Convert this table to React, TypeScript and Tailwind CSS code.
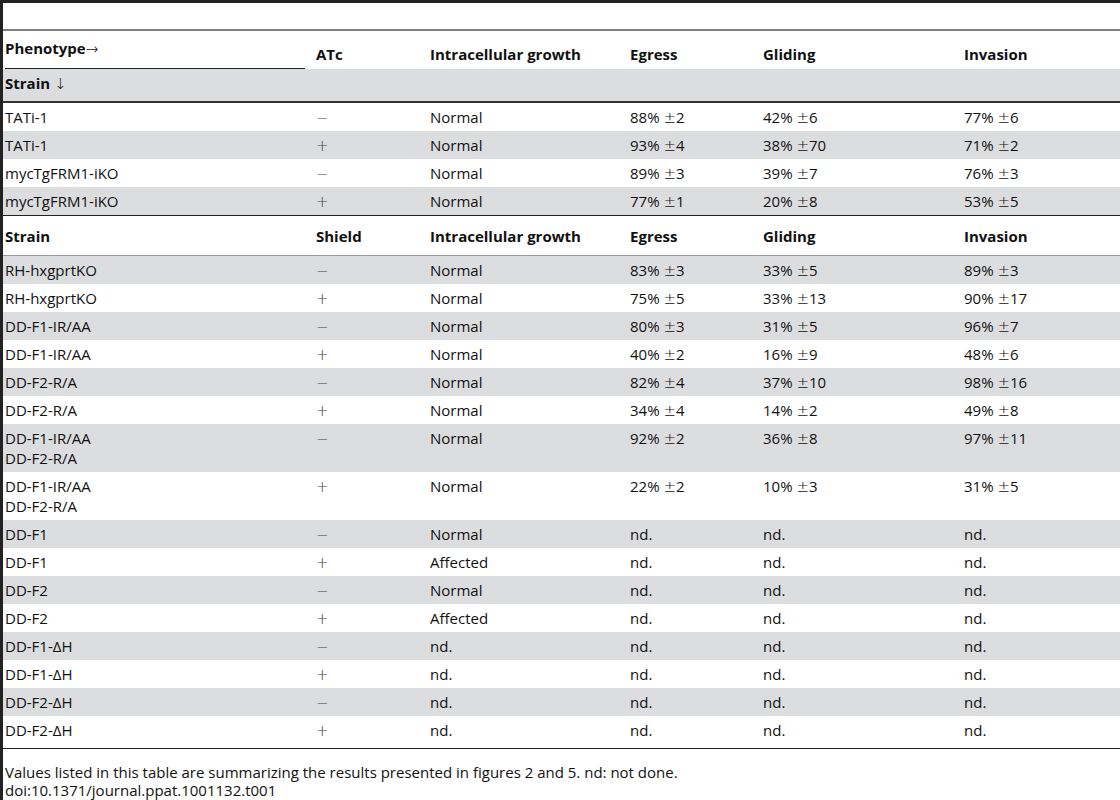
import React from "react";

type Row = {
  strain: string[];
  sign: "+" | "−";
  growth: string;
  egress: string;
  gliding: string;
  invasion: string;
};

const atcRows: Row[] = [
  { strain: ["TATi-1"], sign: "−", growth: "Normal", egress: "88% ±2", gliding: "42% ±6", invasion: "77% ±6" },
  { strain: ["TATi-1"], sign: "+", growth: "Normal", egress: "93% ±4", gliding: "38% ±70", invasion: "71% ±2" },
  { strain: ["mycTgFRM1-iKO"], sign: "−", growth: "Normal", egress: "89% ±3", gliding: "39% ±7", invasion: "76% ±3" },
  { strain: ["mycTgFRM1-iKO"], sign: "+", growth: "Normal", egress: "77% ±1", gliding: "20% ±8", invasion: "53% ±5" },
];

const shieldRows: Row[] = [
  { strain: ["RH-hxgprtKO"], sign: "−", growth: "Normal", egress: "83% ±3", gliding: "33% ±5", invasion: "89% ±3" },
  { strain: ["RH-hxgprtKO"], sign: "+", growth: "Normal", egress: "75% ±5", gliding: "33% ±13", invasion: "90% ±17" },
  { strain: ["DD-F1-IR/AA"], sign: "−", growth: "Normal", egress: "80% ±3", gliding: "31% ±5", invasion: "96% ±7" },
  { strain: ["DD-F1-IR/AA"], sign: "+", growth: "Normal", egress: "40% ±2", gliding: "16% ±9", invasion: "48% ±6" },
  { strain: ["DD-F2-R/A"], sign: "−", growth: "Normal", egress: "82% ±4", gliding: "37% ±10", invasion: "98% ±16" },
  { strain: ["DD-F2-R/A"], sign: "+", growth: "Normal", egress: "34% ±4", gliding: "14% ±2", invasion: "49% ±8" },
  { strain: ["DD-F1-IR/AA", "DD-F2-R/A"], sign: "−", growth: "Normal", egress: "92% ±2", gliding: "36% ±8", invasion: "97% ±11" },
  { strain: ["DD-F1-IR/AA", "DD-F2-R/A"], sign: "+", growth: "Normal", egress: "22% ±2", gliding: "10% ±3", invasion: "31% ±5" },
  { strain: ["DD-F1"], sign: "−", growth: "Normal", egress: "nd.", gliding: "nd.", invasion: "nd." },
  { strain: ["DD-F1"], sign: "+", growth: "Affected", egress: "nd.", gliding: "nd.", invasion: "nd." },
  { strain: ["DD-F2"], sign: "−", growth: "Normal", egress: "nd.", gliding: "nd.", invasion: "nd." },
  { strain: ["DD-F2"], sign: "+", growth: "Affected", egress: "nd.", gliding: "nd.", invasion: "nd." },
  { strain: ["DD-F1-ΔH"], sign: "−", growth: "nd.", egress: "nd.", gliding: "nd.", invasion: "nd." },
  { strain: ["DD-F1-ΔH"], sign: "+", growth: "nd.", egress: "nd.", gliding: "nd.", invasion: "nd." },
  { strain: ["DD-F2-ΔH"], sign: "−", growth: "nd.", egress: "nd.", gliding: "nd.", invasion: "nd." },
  { strain: ["DD-F2-ΔH"], sign: "+", growth: "nd.", egress: "nd.", gliding: "nd.", invasion: "nd." },
];

const cell = "pl-[2px] pr-2 py-1 align-top";
const symbol = { fontFamily: '"DejaVu Sans", sans-serif' };

// a glyph from DejaVu that must not grow the line box
const Sym = ({ c }: { c: string }) => (
  <span className="font-extralight leading-[0px]" style={symbol}>
    {c}
  </span>
);

// value like "88% ±2" -> keep the ± in a math-looking font
const Value = ({ text }: { text: string }) => {
  const parts = text.split("±");
  if (parts.length < 2) return <>{text}</>;
  return (
    <>
      {parts[0]}
      <Sym c="±" />
      {parts[1]}
    </>
  );
};

const DataRow = ({ row, gray }: { row: Row; gray: boolean }) => (
  <tr className={gray ? "bg-[#dcdddf]" : "bg-white"}>
    <td className={cell}>
      {row.strain.map((s, i) => (
        <div key={i}>{s}</div>
      ))}
    </td>
    <td className={`${cell} text-[#444]`}>
      <Sym c={row.sign} />
    </td>
    <td className={cell}>{row.growth}</td>
    <td className={cell}>
      <Value text={row.egress} />
    </td>
    <td className={cell}>
      <Value text={row.gliding} />
    </td>
    <td className={cell}>
      <Value text={row.invasion} />
    </td>
  </tr>
);

export default function App() {
  return (
    <div
      className="w-[1120px] h-[800px] bg-white border-t-[3px] border-l-[3px] border-[#222] text-[#111] text-[15px] leading-[20px] overflow-hidden"
      style={{ fontFamily: '"Open Sans", "Liberation Sans", sans-serif' }}
    >
      <div className="h-[26px]" />
      <div className="h-[2px] bg-[#808080]" />
      <table className="w-full border-collapse table-fixed">
        <colgroup>
          <col className="w-[311px]" />
          <col className="w-[114px]" />
          <col className="w-[200px]" />
          <col className="w-[133px]" />
          <col className="w-[201px]" />
          <col />
        </colgroup>
        <thead>
          <tr className="font-bold">
            <td className="pl-[2px] pt-[7px] align-top">
              <div className="mr-[9px] pb-[10px] border-b border-[#222]">
                Phenotype
                <Sym c="→" />
              </div>
            </td>
            <td className="pl-[2px] pb-[5px] align-bottom">ATc</td>
            <td className="pl-[2px] pb-[5px] align-bottom">Intracellular growth</td>
            <td className="pl-[2px] pb-[5px] align-bottom">Egress</td>
            <td className="pl-[2px] pb-[5px] align-bottom">Gliding</td>
            <td className="pl-[2px] pb-[5px] align-bottom">Invasion</td>
          </tr>
          <tr className="bg-[#dcdddf] font-bold border-b-2 border-[#333]">
            <td colSpan={6} className="pl-[2px] pt-[4px] pb-[8px]">
              Strain <Sym c="↓" />
            </td>
          </tr>
        </thead>
        <tbody>
          {atcRows.map((r, i) => (
            <DataRow key={i} row={r} gray={i % 2 === 1} />
          ))}
          <tr className="font-bold border-t border-[#222] border-b border-b-[#9a9a9a]">
            <td className="pl-[2px] pt-[10px] pb-[9px]">Strain</td>
            <td className="pl-[2px] pt-[10px] pb-[9px]">Shield</td>
            <td className="pl-[2px] pt-[10px] pb-[9px]">Intracellular growth</td>
            <td className="pl-[2px] pt-[10px] pb-[9px]">Egress</td>
            <td className="pl-[2px] pt-[10px] pb-[9px]">Gliding</td>
            <td className="pl-[2px] pt-[10px] pb-[9px]">Invasion</td>
          </tr>
          {shieldRows.map((r, i) => (
            <DataRow key={i} row={r} gray={i % 2 === 0} />
          ))}
        </tbody>
      </table>
      <div className="mt-[4px] border-t-[1.5px] border-[#222] pl-[2px] pt-[14px] text-[15px] leading-[18px]">
        <div>
          Values listed in this table are summarizing the results presented in figures 2 and 5. nd: not done.
        </div>
        <div>doi:10.1371/journal.ppat.1001132.t001</div>
      </div>
    </div>
  );
}
